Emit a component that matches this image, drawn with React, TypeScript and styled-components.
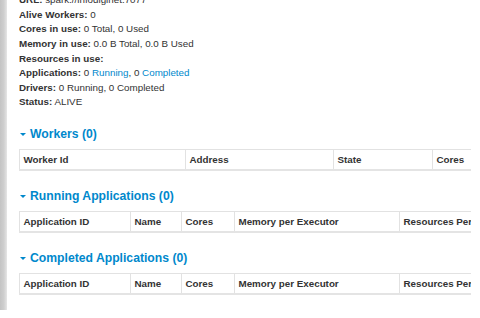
import React from "react";
import styled, { createGlobalStyle } from "styled-components";

const Global = createGlobalStyle`
  html, body { margin: 0; padding: 0; background: #fff; }
  body { font-family: "Liberation Sans", Arial, Helvetica, sans-serif; color: #333; overflow: hidden; }
`;

const Page = styled.div`
  display: flex;
  width: 480px;
  height: 318px;
  overflow: hidden;
`;

const Gutter = styled.div`
  flex: 0 0 7px;
  height: 310px;
  background: linear-gradient(to right, #c4c4c4 0%, #cfcfcf 55%, #e6e6e6 100%);
`;

const Content = styled.div`
  flex: 0 0 452px;
  margin-left: 12px;
  overflow: hidden;
`;

const InfoList = styled.ul`
  list-style: none;
  margin: -6.8px 0 0 0;
  padding: 0;
  font-size: 9.8px;
  line-height: 14.6px;
`;

const InfoItem = styled.li`
  white-space: nowrap;
`;

const Label = styled.strong`
  font-weight: bold;
`;

const Link = styled.a`
  color: #0088cc;
  text-decoration: none;
`;

const Section = styled.section<{ $first?: boolean }>`
  margin-top: ${(p) => (p.$first ? "17.3px" : "18px")};
`;

const Heading = styled.h4`
  margin: 0 0 8px 0;
  display: flex;
  align-items: center;
  gap: 4px;
  font-size: 12.2px;
  line-height: 14px;
  font-weight: bold;
  color: #0088cc;
  white-space: nowrap;
`;

const Caret = styled.span`
  display: inline-block;
  width: 0;
  height: 0;
  margin-left: 1px;
  border-left: 3px solid transparent;
  border-right: 3px solid transparent;
  border-top: 3.5px solid #0088cc;
`;

const Table = styled.table<{ $w: number }>`
  border-collapse: collapse;
  table-layout: fixed;
  width: ${(p) => p.$w}px;
  font-size: 9.8px;
`;

const Th = styled.th<{ $w: number }>`
  width: ${(p) => p.$w}px;
  box-sizing: border-box;
  text-align: left;
  font-weight: bold;
  color: #333;
  padding: 2.5px 3.5px;
  line-height: 14px;
  border-left: 1px solid #e2e2e2;
  border-top: 1px solid #e2e2e2;
  border-bottom: 2px solid #e4e4e4;
  white-space: nowrap;
  overflow: hidden;
`;

type Col = { name: string; w: number };

const DataTable = ({ cols }: { cols: Col[] }) => (
  <Table $w={cols.reduce((s, c) => s + c.w, 0)}>
    <thead>
      <tr>
        {cols.map((c) => (
          <Th key={c.name} $w={c.w}>
            {c.name}
          </Th>
        ))}
      </tr>
    </thead>
  </Table>
);

const workerCols: Col[] = [
  { name: "Worker Id", w: 166 },
  { name: "Address", w: 148 },
  { name: "State", w: 99 },
  { name: "Cores", w: 80 },
  { name: "Memory", w: 80 },
];

const appCols: Col[] = [
  { name: "Application ID", w: 111 },
  { name: "Name", w: 51 },
  { name: "Cores", w: 53 },
  { name: "Memory per Executor", w: 165 },
  { name: "Resources Per Executor", w: 160 },
];

export default function App() {
  return (
    <>
      <Global />
      <Page>
        <Gutter />
        <Content>
          <InfoList>
            <InfoItem>
              <Label>URL:</Label> spark://infodiginet:7077
            </InfoItem>
            <InfoItem>
              <Label>Alive Workers:</Label> 0
            </InfoItem>
            <InfoItem>
              <Label>Cores in use:</Label> 0 Total, 0 Used
            </InfoItem>
            <InfoItem>
              <Label>Memory in use:</Label> 0.0 B Total, 0.0 B Used
            </InfoItem>
            <InfoItem>
              <Label>Resources in use:</Label>
            </InfoItem>
            <InfoItem>
              <Label>Applications:</Label> 0 <Link href="#">Running</Link>, 0{" "}
              <Link href="#">Completed</Link>
            </InfoItem>
            <InfoItem>
              <Label>Drivers:</Label> 0 Running, 0 Completed
            </InfoItem>
            <InfoItem>
              <Label>Status:</Label> ALIVE
            </InfoItem>
          </InfoList>

          <Section $first>
            <Heading>
              <Caret />
              Workers (0)
            </Heading>
            <DataTable cols={workerCols} />
          </Section>

          <Section>
            <Heading>
              <Caret />
              Running Applications (0)
            </Heading>
            <DataTable cols={appCols} />
          </Section>

          <Section>
            <Heading>
              <Caret />
              Completed Applications (0)
            </Heading>
            <DataTable cols={appCols} />
          </Section>
        </Content>
      </Page>
    </>
  );
}
